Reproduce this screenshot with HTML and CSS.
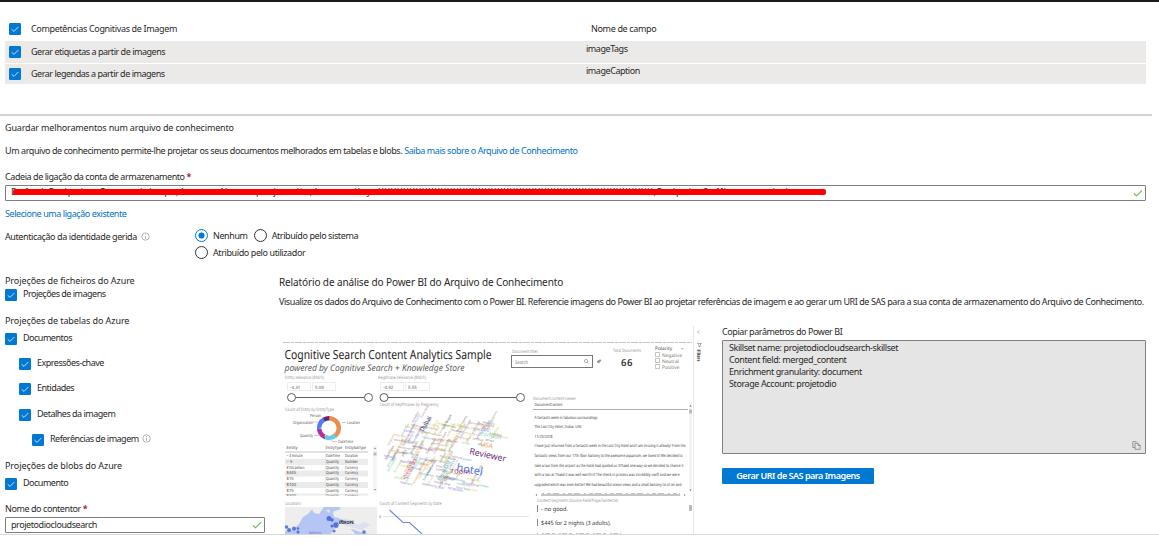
FILE: index.html
```html
<!DOCTYPE html>
<html lang="pt">
<head>
<meta charset="utf-8">
<title>Arquivo de conhecimento</title>
<link rel="stylesheet" href="styles.css">
</head>
<body>
<svg class="defs" width="0" height="0" aria-hidden="true">
  <symbol id="check" viewBox="0 0 12 12"><rect width="12" height="12" rx="1.3" fill="#0078d4"/><path d="M2.7 6.3 5 8.4 9.3 4" fill="none" stroke="#d6eafa" stroke-width=".9"/></symbol>
  <symbol id="info" viewBox="0 0 9 9"><circle cx="4.5" cy="4.500" r="3.7" fill="none" stroke="#979593" stroke-width=".7"/><path d="M4.5 4v2.700M4.500 2.200v1" stroke="#979593" stroke-width=".7"/></symbol>
  <symbol id="ok" viewBox="0 0 10 8"><path d="M1 4.500 3.500 6.800 9 1.300" fill="none" stroke="#70b04c" stroke-width="1.1"/></symbol>
</svg>
<main class="page">
  <section class="skills">
    <div class="row head"><svg class="cb"><use href="#check"/></svg><span class="name">Competências Cognitivas de Imagem</span><span class="field">Nome de campo</span></div>
    <div class="row first"><svg class="cb"><use href="#check"/></svg><span class="name">Gerar etiquetas a partir de imagens</span><span class="field">imageTags</span></div>
    <div class="row second"><svg class="cb"><use href="#check"/></svg><span class="name">Gerar legendas a partir de imagens</span><span class="field">imageCaption</span></div>
  </section>
  <section class="store">
    <h2 class="title">Guardar melhoramentos num arquivo de conhecimento</h2>
    <p class="intro">Um arquivo de conhecimento permite-lhe projetar os seus documentos melhorados em tabelas e blobs. <a>Saiba mais sobre o Arquivo de Conhecimento</a></p>
    <label class="label">Cadeia de ligação da conta de armazenamento <b>*</b></label>
    <div class="input wide"><span class="secret">DefaultEndpointsProtocol=https;AccountName=projetodio;AccountKey=XXXXXXXXXXXXXXXXXXXXXXXXXXXXXXXXXXXXXXXXXXXX;EndpointSuffix=core.windows.net</span><i class="strike"></i><svg class="ok"><use href="#ok"/></svg></div>
    <a class="pick">Selecione uma ligação existente</a>
    <div class="auth">
      <span class="auth-label">Autenticação da identidade gerida <svg class="info"><use href="#info"/></svg></span>
      <div class="radios">
        <span class="radio on"><i></i>Nenhum</span><span class="radio"><i></i>Atribuído pelo sistema</span>
        <span class="radio last"><i></i>Atribuído pelo utilizador</span>
      </div>
    </div>
  </section>
  <div class="columns">
    <section class="left">
      <h3 class="title">Projeções de ficheiros do Azure</h3>
      <div class="opt files"><svg class="cb"><use href="#check"/></svg>Projeções de imagens</div>
      <h3 class="title">Projeções de tabelas do Azure</h3>
      <div class="opt docs"><svg class="cb"><use href="#check"/></svg>Documentos</div>
      <div class="opt in1"><svg class="cb"><use href="#check"/></svg>Expressões-chave</div>
      <div class="opt in1 entities"><svg class="cb"><use href="#check"/></svg>Entidades</div>
      <div class="opt in1"><svg class="cb"><use href="#check"/></svg>Detalhes da imagem</div>
      <div class="opt in2"><svg class="cb"><use href="#check"/></svg><span>Referências de imagem <svg class="info"><use href="#info"/></svg></span></div>
      <h3 class="title">Projeções de blobs do Azure</h3>
      <div class="opt blob"><svg class="cb"><use href="#check"/></svg>Documento</div>
      <label class="label">Nome do contentor <b>*</b></label>
      <div class="input">projetodiocloudsearch<svg class="ok"><use href="#ok"/></svg></div>
    </section>
    <section class="right">
      <h3 class="report-title">Relatório de análise do Power BI do Arquivo de Conhecimento</h3>
      <p class="report-text">Visualize os dados do Arquivo de Conhecimento com o Power BI. Referencie imagens do Power BI ao projetar referências de imagem e ao gerar um URI de SAS para a sua conta de armazenamento do Arquivo de Conhecimento.</p>
      <div class="panels">
        <svg class="report" viewBox="279 325 436 209">
          <path d="M283 342.500H692" stroke="#c4c4c4" stroke-dasharray="7 1 3 1"/>
          <path d="M693.500 326V534" stroke="#e9e9e9"/>
          <g fill="#252423">
            <text x="284.500" y="358.500" font-size="12.500" textLength="207" lengthAdjust="spacingAndGlyphs">Cognitive Search Content Analytics Sample</text>
            <text x="284.500" y="370.500" font-size="9" font-style="italic" fill="#605e5c" textLength="180" lengthAdjust="spacingAndGlyphs">powered by Cognitive Search + Knowledge Store</text>
          </g>
          <g font-size="4.500" fill="#999">
            <text x="285" y="379" textLength="39" lengthAdjust="spacingAndGlyphs">Entity relevance (BM25)</text>
            <text x="378" y="379" textLength="48" lengthAdjust="spacingAndGlyphs">Keyphrase relevance (BM25)</text>
            <text x="285" y="410.500" textLength="49" lengthAdjust="spacingAndGlyphs">Count of Entity by EntityType</text>
            <text x="379.500" y="405.500" textLength="59" lengthAdjust="spacingAndGlyphs">Count of KeyPhrases by Frequency</text>
            <text x="512" y="353" textLength="26" lengthAdjust="spacingAndGlyphs">Document titles</text>
            <text x="613" y="352" textLength="28" lengthAdjust="spacingAndGlyphs">Total Documents</text>
            <text x="533" y="399.500" textLength="43" lengthAdjust="spacingAndGlyphs">Document content viewer</text>
            <text x="285" y="504.500" textLength="16" lengthAdjust="spacingAndGlyphs">Locations</text>
            <text x="379.500" y="504.500" textLength="62" lengthAdjust="spacingAndGlyphs">Count of Content Segments by Date</text>
            <text x="537" y="502" textLength="81" lengthAdjust="spacingAndGlyphs">Content Segments (Source Field/Page/Sentence)</text>
          </g>
          <g fill="none" stroke="#ededed"><path d="M287.500 382.500h23v8h-23zM312.500 382.500h23v8h-23zM380.500 382.500h23v8h-23zM405.500 382.500h24v8h-24z"/></g>
          <g font-size="4.500" fill="#555"><text x="290" y="388.500">-4.31</text><text x="315" y="388.500">5.09</text><text x="383" y="388.500">-4.92</text><text x="408" y="388.500">5.55</text></g>
          <g fill="#fff" stroke="#605e5c"><path d="M291 397.500H368M384 397.500H520"/><circle cx="291.500" cy="397.500" r="4"/><circle cx="368.500" cy="397.500" r="4"/><circle cx="384" cy="397.500" r="4"/><circle cx="520.500" cy="397.500" r="4"/></g>
          <rect x="511.500" y="355.500" width="81" height="12" fill="#fff" stroke="#777"/>
          <text x="515" y="363.500" font-size="5" fill="#777" textLength="13" lengthAdjust="spacingAndGlyphs">Search</text>
          <g fill="none" stroke="#777" stroke-width=".6"><circle cx="586" cy="361" r="1.600"/><path d="m587.200 362.200 1.500 1.500"/></g>
          <path d="m597 362 2-2h2l-2 3z" fill="#aaa" stroke="#666" stroke-width=".5"/>
          <text x="621" y="365.500" font-size="9.500" font-weight="600" fill="#333" textLength="11.500">66</text>
          <g font-size="4.800" fill="#777"><text x="655" y="350" fill="#444">Polarity</text><text x="662" y="356.500">Negative</text><text x="662" y="362.500">Neutral</text><text x="662" y="368.500">Positive</text></g>
          <path d="m681 348 1.300 1.300 1.300-1.300M699 330.500l-1.500 1.500 1.500 1.500M697.500 343.500h4l-1.500 1.500v2l-1-.5v-1.500z" fill="none" stroke="#777" stroke-width=".6"/>
          <path d="M655.500 352.500h4v4h-4zM655.500 358.500h4v4h-4zM655.500 364.500h4v4h-4z" fill="#fff" stroke="#aaa" stroke-width=".7"/>
          <text transform="translate(697 349.500) rotate(90)" font-size="4.800" font-weight="700" fill="#333" textLength="12" lengthAdjust="spacingAndGlyphs">Filters</text>
          <g fill="none" stroke-width="4.500">
            <circle cx="329" cy="428" r="9.800" stroke="#e68f50" pathLength="100" stroke-dasharray="42 58" transform="rotate(-90 329 428)"/>
            <circle cx="329" cy="428" r="9.800" stroke="#66cbea" pathLength="100" stroke-dasharray="18 82" transform="rotate(50 329 428)"/>
            <circle cx="329" cy="428" r="9.800" stroke="#b5309b" pathLength="100" stroke-dasharray="17 83" transform="rotate(115 329 428)"/>
            <circle cx="329" cy="428" r="9.800" stroke="#527cf4" pathLength="100" stroke-dasharray="18 82" transform="rotate(176 329 428)"/>
            <circle cx="329" cy="428" r="9.800" stroke="#68217a" pathLength="100" stroke-dasharray="9 91" transform="rotate(239 329 428)"/>
          </g>
          <g font-size="4.200" fill="#555"><text x="310" y="416.500" textLength="11" lengthAdjust="spacingAndGlyphs">Person</text><text x="293" y="423.500" textLength="20" lengthAdjust="spacingAndGlyphs">Organization</text><text x="347" y="424" textLength="13" lengthAdjust="spacingAndGlyphs">Location</text><text x="300" y="437" textLength="13" lengthAdjust="spacingAndGlyphs">Quantity</text><text x="338" y="443" textLength="15" lengthAdjust="spacingAndGlyphs">DateTime</text></g>
          <path d="M313 422h4l2 1M342 422.500h4M314 435.500h4l2-1M331 440l2 1.500h4" stroke="#aaa" stroke-width=".6" fill="none"/>
          <path d="M285 459h83v6h-83zM285 470.500h83v6h-83zM285 482h83v6h-83zM285 493.500h83v2h-83z" fill="#ebebeb"/>
          <path d="M285 452h83" stroke="#aaa" stroke-width=".7"/><path d="M325.500 446v49" stroke="#ddd" stroke-width=".6"/>
          <g font-size="4.200" fill="#444">
            <text x="286.500" y="449">Entity</text><text x="326" y="449" textLength="16" lengthAdjust="spacingAndGlyphs">EntityType</text><text x="345" y="449" textLength="21" lengthAdjust="spacingAndGlyphs">EntitySubType</text>
            <text x="286.500" y="457" textLength="16" lengthAdjust="spacingAndGlyphs">~ 4 minute</text><text x="326" y="457" textLength="14" lengthAdjust="spacingAndGlyphs">DateTime</text><text x="345" y="457" textLength="13" lengthAdjust="spacingAndGlyphs">Duration</text>
            <text x="286.500" y="463">~ 5</text><text x="326" y="463" textLength="13" lengthAdjust="spacingAndGlyphs">Quantity</text><text x="345" y="463" textLength="13" lengthAdjust="spacingAndGlyphs">Number</text>
            <text x="286.500" y="468.500" textLength="18" lengthAdjust="spacingAndGlyphs">$100 dollars</text><text x="326" y="468.500" textLength="13" lengthAdjust="spacingAndGlyphs">Quantity</text><text x="345" y="468.500" textLength="13" lengthAdjust="spacingAndGlyphs">Currency</text>
            <text x="286.500" y="474.300">$445</text><text x="326" y="474.300" textLength="13" lengthAdjust="spacingAndGlyphs">Quantity</text><text x="345" y="474.300" textLength="13" lengthAdjust="spacingAndGlyphs">Currency</text>
            <text x="286.500" y="480">$15</text><text x="326" y="480" textLength="13" lengthAdjust="spacingAndGlyphs">Quantity</text><text x="345" y="480" textLength="13" lengthAdjust="spacingAndGlyphs">Currency</text>
            <text x="286.500" y="485.800">$100</text><text x="326" y="485.800" textLength="13" lengthAdjust="spacingAndGlyphs">Quantity</text><text x="345" y="485.800" textLength="13" lengthAdjust="spacingAndGlyphs">Currency</text>
            <text x="286.500" y="491.600">$75</text><text x="326" y="491.600" textLength="13" lengthAdjust="spacingAndGlyphs">Quantity</text><text x="345" y="491.600" textLength="13" lengthAdjust="spacingAndGlyphs">Currency</text>
          </g>
          <g font-size="4.200" fill="#666"><text x="286.500" y="497.300">$300</text><text x="326" y="497.300" textLength="13" lengthAdjust="spacingAndGlyphs">Quantity</text><text x="345" y="497.300" textLength="13" lengthAdjust="spacingAndGlyphs">Currency</text></g><path d="M284 496h90v2.800h-90z" fill="#fff"/>
          <path d="M373 446h4v48h-4z" fill="#f5f5f5"/><path d="M373.500 452.500h3v3h-3z" fill="#bbb"/><path d="m374 449 1-1.500 1 1.500zM374 489l1 1.500 1-1.500z" fill="#777"/>
          <g id="cloud"></g>
          <rect x="285" y="507" width="92" height="27" fill="#b5c5f4"/>
          <path d="M285 507h29l-6 7-5 3-4 7-5 5-9 2zM311 507h13l-5 7-5-1zM326 510h4l-1 3zM333 512l2-1 1 3-2 2zM339 507h38v27h-8l-9-2-8-3-7 2-7-2-1-5 7-2-5-4-5-1 1-6 6-2zM333 529l9-2 10 3 3 4h-24z" fill="#eeeeec"/>
          <path d="M344 518l6 2 8 5 7-3 5 3-8 5-8-2-11-3z" fill="#dbe1f1"/>
          <g fill="#3454d4" opacity=".75"><circle cx="286.500" cy="527" r="1.800"/><circle cx="289" cy="530" r="2"/><circle cx="294" cy="528.500" r="2"/><circle cx="298" cy="528.500" r="1.300"/><circle cx="298" cy="532" r="1.500"/><circle cx="329" cy="518.500" r="2.500"/><circle cx="332" cy="520" r="1.800"/><circle cx="336" cy="525" r="2.700"/><circle cx="332" cy="526" r="1.500"/><circle cx="342" cy="521" r="1.500"/><circle cx="334" cy="531" r="1.600"/><circle cx="364" cy="532" r="1.800"/></g>
          <text x="339" y="524" font-size="4.500" font-weight="700" fill="#222" textLength="15" lengthAdjust="spacingAndGlyphs">EUROPE</text><text x="309" y="533.500" font-size="3.800" font-style="italic" fill="#7080b0">Atlantic</text>
          <path d="M383 516.500H529" stroke="#e5e5e5"/><text x="379" y="518" font-size="4" fill="#777">5</text>
          <path d="M389.500 510 403 522.500h6.500L422 534" fill="none" stroke="#7388e0" stroke-width="1.200"/>
          <path d="M533 409.500H688" stroke="#999" stroke-width=".8"/>
          <path d="M689 402h3v88h-3z" fill="#f3f3f3"/><path d="M689 409.500h3v4h-3zM689 505h3v6h-3z" fill="#bbb"/><path d="m689.500 406.500 1-1.500 1 1.500zM689.500 489.500l1 1.500 1-1.500z" fill="#666"/>
          <g font-size="4.200" fill="#3b3a39">
            <text x="534.500" y="406" textLength="28" lengthAdjust="spacingAndGlyphs">DocumentContent</text>
            <text x="534.500" y="418.500" textLength="63" lengthAdjust="spacingAndGlyphs">A fantastic week in fabulous surroundings</text>
            <text x="534.500" y="428" textLength="47" lengthAdjust="spacingAndGlyphs">The Lost City Hotel, Dubai, UAE</text>
            <text x="534.500" y="437.500" textLength="18" lengthAdjust="spacingAndGlyphs">11/23/2018</text>
            <text x="534.500" y="447.300" textLength="151" lengthAdjust="spacingAndGlyphs">I have just returned from a fantastic week in the Lost City Hotel and I am missing it already! From the</text>
            <text x="534.500" y="457" textLength="148" lengthAdjust="spacingAndGlyphs">fantastic views from our 17th floor balcony to the awesome aquarium, we loved it! We decided to</text>
            <text x="534.500" y="466.700" textLength="149" lengthAdjust="spacingAndGlyphs">take a taxi from the airport as the hotel had quoted us 375aed one way so we decided to chance it</text>
            <text x="534.500" y="476.300" textLength="145" lengthAdjust="spacingAndGlyphs">with a taxi at 75aed it was well worth it! The check in process was incredibly swift and we were</text>
            <text x="534.500" y="486" textLength="147" lengthAdjust="spacingAndGlyphs">upgraded which was even better! We had beautiful ocean views and a small balcony to sit on and</text>
          </g>
          <path d="M541 495h139" stroke="#c4c4c4" stroke-width="2"/><path d="M542 493.500h138" stroke="#aaa" stroke-width=".7" stroke-dasharray="2 3 4 2 6 4"/><path d="m537 494-1.500 1 1.500 1zM684 494l1.500 1-1.500 1z" fill="#777"/>
          <path d="M537.500 505v7M537.500 519v7" stroke="#888"/>
          <g font-size="5.800" fill="#333"><text x="541" y="511" textLength="27" lengthAdjust="spacingAndGlyphs">- no good.</text><text x="541" y="525" textLength="70" lengthAdjust="spacingAndGlyphs">$445 for 2 nights (3 adults).</text></g>
          <path d="M537.500 532.500v2M542 533.500H621" stroke="#aaa" stroke-width=".7" stroke-dasharray="2 1 5 2 3 4"/>
        </svg>
        <div class="params">
          <label>Copiar parâmetros do Power BI</label>
          <div class="box">Skillset name: projetodiocloudsearch-skillset<br>Content field: merged_content<br>Enrichment granularity: document<br>Storage Account: projetodio
            <svg class="copy" viewBox="0 0 9 9"><path d="M3 6.500H.8V.7h3.500L5 1.400M3 2.300h3l2.200 2.200v3.800H3zM6 2.300v2.200h2.200" fill="none" stroke="#858381" stroke-width=".8"/></svg>
          </div>
          <button>Gerar URI de SAS para Imagens</button>
        </div>
      </div>
    </section>
  </div>
</main>
<script src="cloud.js"></script>
</body>
</html>
```

FILE: styles.css
```css
* { box-sizing: border-box; }
body { margin: 0; background: #fff; color: #292827; font: 9px/12px "Noto Sans", "Open Sans", sans-serif; letter-spacing: -.43px; }
h2, h3, p { margin: 0; font-weight: 400; font-size: inherit; }
a { color: #0072c9; }
b { color: #a4262c; font-weight: 700; }
.defs { position: absolute; }
.page { height: 545px; overflow: hidden; border-top: 2px solid #1b1a19; white-space: nowrap; }
.cb { width: 12px; height: 12px; flex: none; display: block; }
.info { width: 9px; height: 9px; margin-left: 2px; vertical-align: -1px; }

.skills { height: 112px; padding: 15px 13px 0 5px; }
.row { display: grid; grid-template-columns: 12px 555px 1fr; align-items: center; padding-left: 4px; }
.name { padding-left: 10px; }
.field { padding-left: 10px; }
.head { height: 24px; letter-spacing: -.34px; }
.head .field { padding-left: 15px; }
.first { height: 22px; background: #ebeae9; margin-bottom: 1px; }
.second { height: 20px; background: #ebeae9; }
.first .name, .second .name { letter-spacing: -.47px; }
.first .field, .second .field { padding: 0 0 6px 10px; letter-spacing: -.45px; }

.store { height: 161px; padding: 6px 13px 0 5px; }
.store::before { content: ""; display: block; height: 2px; margin: -6px 0 6px -5px; width: 1152px; background: #d2d2d3; }
.title { letter-spacing: -.16px; height: 12px; }
.intro { margin-top: 11px; }
.label { display: block; margin-top: 14px; height: 12px; }
.input { height: 16px; margin-top: 2px; border: 1px solid #807e7c; border-radius: 1px; padding-left: 5px; line-height: 14px; display: flex; align-items: center; justify-content: space-between; position: relative; background: #fff; }
.input .ok { width: 10px; height: 8px; margin-right: 2px; }
.secret { width: 800px; height: 14px; line-height: 12px; overflow: hidden; letter-spacing: .98px; }
.strike { position: absolute; left: 7px; top: 3px; width: 813px; height: 6px; border-radius: 2px; background: #f00; }
.pick { display: block; margin-top: 7px; }
.auth { display: flex; margin-top: 9px; }
.auth-label { width: 190px; padding-top: 2px; letter-spacing: -.4px; }
.radios { width: 240px; display: flex; flex-wrap: wrap; gap: 4px 6px; letter-spacing: -.4px; }
.radio { display: flex; align-items: center; gap: 5px; height: 13px; }
.radio i { width: 13px; height: 13px; border: 1px solid #323130; border-radius: 50%; }
.radio.on i { border-color: #0078d4; background: radial-gradient(circle, #0078d4 0 2.8px, #fff 3.3px); }

.columns { display: flex; height: 260px; padding-left: 5px; border-bottom: 1px solid #d9d9d9; }
.left { width: 260px; }
.left .title { letter-spacing: -.08px; }
.opt { display: flex; gap: 6px; height: 12px; line-height: 10px; margin-bottom: 13px; letter-spacing: -.5px; }
.files { margin: 2px 0 14px; }
.docs { margin-top: 6px; }
.in1 { padding-left: 14px; }
.entities { margin-bottom: 14px; }
.in2 { padding-left: 27px; }
.in2 + .title { margin-top: 14px; }
.blob { margin-top: 6px; }
.left .label { margin-top: 13px; }
.right { width: 881px; padding-left: 14px; }
.report-title { font-size: 10px; height: 12px; margin-top: 1px; letter-spacing: -.12px; }
.report-text { margin-top: 8px; }
.panels { display: flex; margin-top: 17px; }
.report { width: 436px; height: 209px; flex: none; letter-spacing: 0; text-rendering: geometricPrecision; }
.params { width: 424px; margin-left: 7px; flex: none; }
.params label { display: block; padding-top: 1px; margin-bottom: 2px; }
.box { height: 114px; border: 1px solid #81807f; border-radius: 1px; background: #e5e5e5; padding: 1px 6px; position: relative; letter-spacing: -.4px; }
.copy { position: absolute; right: 4px; bottom: 3px; width: 9px; height: 9px; }
button { display: block; width: 152px; height: 16px; margin-top: 14px; padding: 0; border: 0; border-radius: 1px; background: #0078d4; color: #fff; font: 600 9px/16px "Noto Sans", sans-serif; letter-spacing: -.48px; }
```

FILE: cloud.js
```js
// Lays out the key phrase cloud on a skewed grid.
const cloud = document.getElementById("cloud");
const words = ["experience", "service", "beach area", "swimming pool", "breakfast", "New York", "London", "staff member", "location", "night", "bathroom", "restaurant", "great time", "Las Vegas", "street", "reception", "place", "hotel rooms", "front desk", "ocean view"];
const colors = ["#7fa8e2", "#9ad67a", "#d39a58", "#9a70c2", "#808080", "#b28080", "#66c2ae", "#d0d34c", "#8080dc", "#9c9264", "#ebb462", "#6b6182"];
let seed = 11;
const rnd = () => (seed = (seed * 16807) % 2147483647) / 2147483647;
function word(text, x, y, size, angle, color) {
  const t = document.createElementNS("http://www.w3.org/2000/svg", "text");
  t.setAttribute("transform", `translate(${x} ${y}) rotate(${angle})`);
  t.setAttribute("font-size", size);
  t.setAttribute("fill", color);
  t.textContent = text;
  cloud.append(t);
}
for (let row = 0; row < 14; row++) {
  for (let col = 0; col < 15; col++) {
    const a = (col - 7) * 8 + rnd() * 5 - 5;
    const b = (row - 6.5) * 6 + rnd() * 3;
    if (Math.abs(a) / 72 + Math.abs(b) / 66 > 1.12) continue;
    const x = 444 + a * 0.95 + b * 0.3;
    const y = 455 + a * 0.1 - b * 0.84;
    if (x < 383 || x > 498 || y > 489) continue;
    if (y < 423 && x < 472 && x > 424) continue;
    if (y < 425 && x < 396) continue;
    if (x > 454 && x < 497 && y > 445 && y < 476) continue;
    const up = rnd() > 0.5;
    word(words[Math.floor(rnd() * words.length)], x.toFixed(1), y.toFixed(1), (2.6 + rnd() * 0.9).toFixed(1), up ? -60 : 12, colors[Math.floor(rnd() * colors.length)]);
  }
}
word("Dubai", 423, 432, 6, -60, "#454090");
word("London", 480, 435, 6, 12, "#7bd7b4");
word("USA", 480, 446, 6.5, 12, "#ec9c5b");
word("Reviewer", 469, 454, 8.8, 12, "#6b1b78");
word("hotel", 456, 471, 11, 10, "#4d75df");
word("room", 451, 473, 7.5, 5, "#a94880");
word("New York", 406, 478, 5, -60, "#e05555");
word("breakfast", 440, 481, 5, -60, "#54b9c9");
```
